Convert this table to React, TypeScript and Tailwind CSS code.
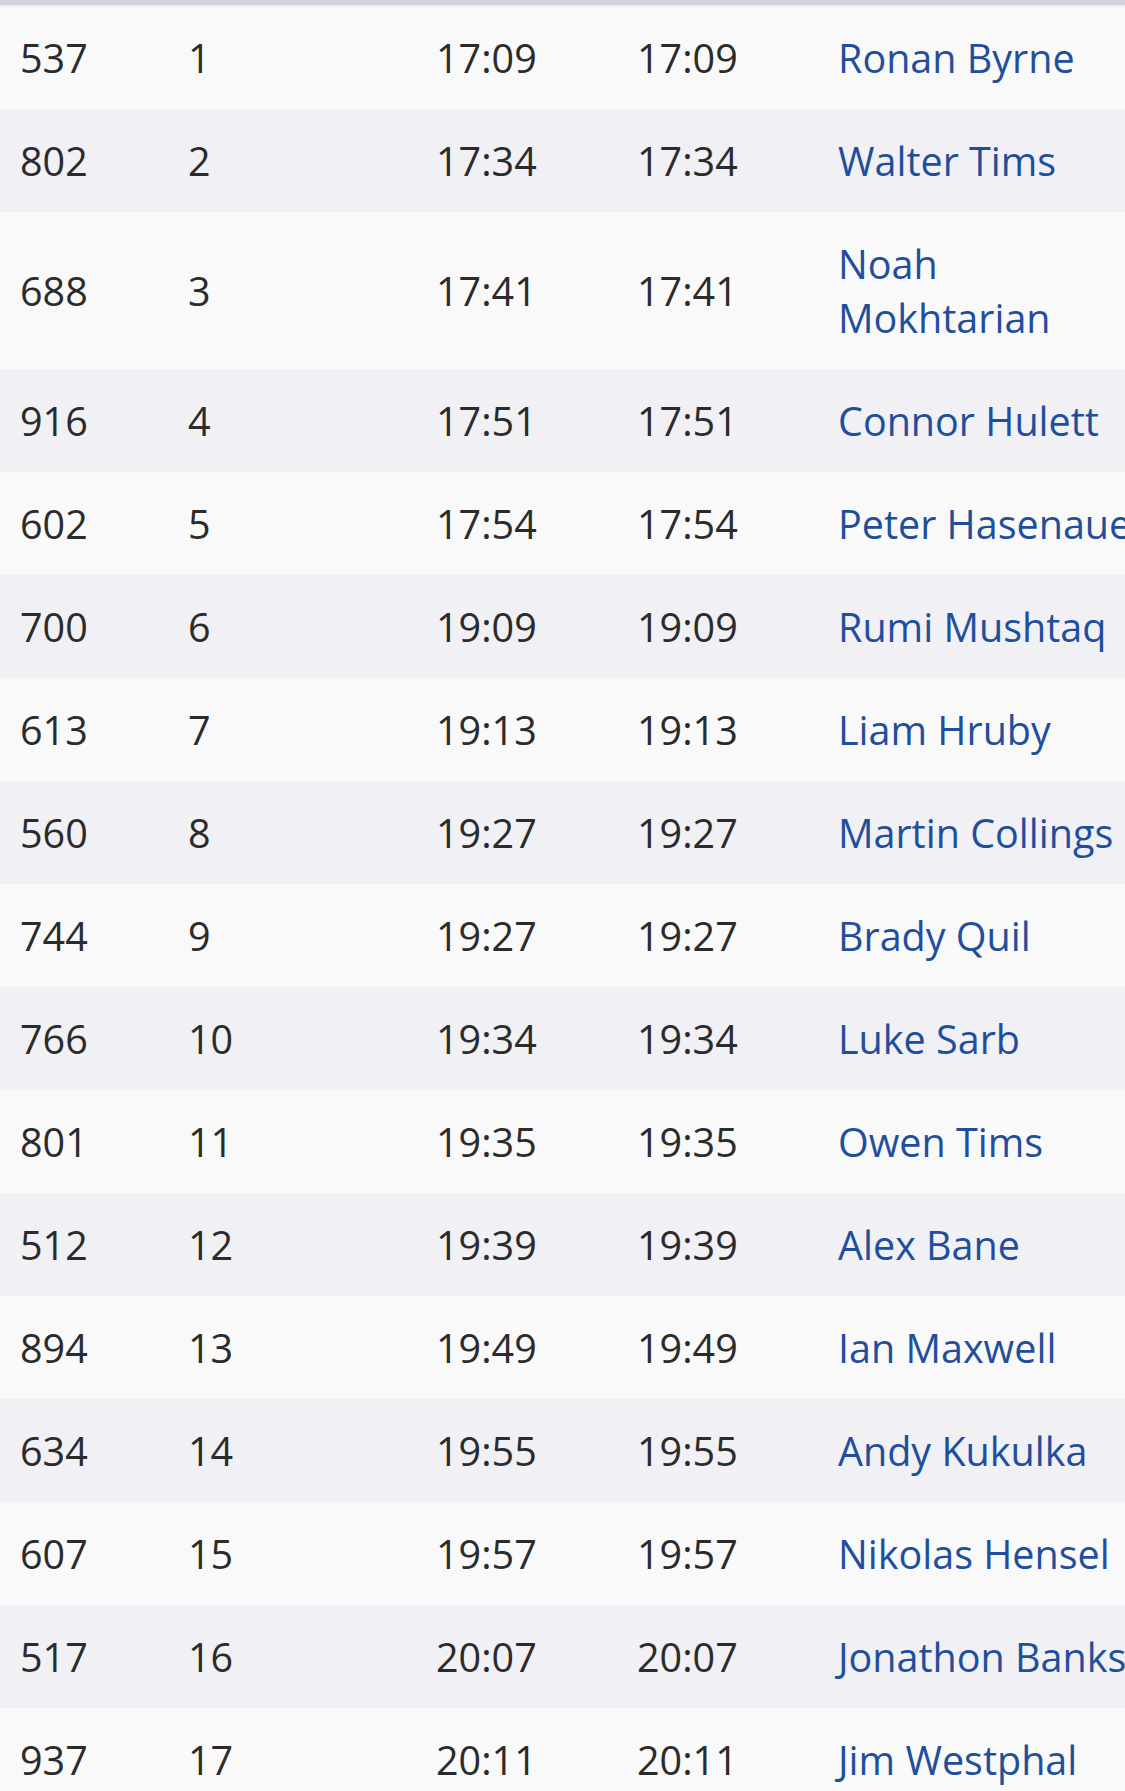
import React from "react";

const rows: [string, string, string, string, string][] = [
  ["537", "1", "17:09", "17:09", "Ronan Byrne"],
  ["802", "2", "17:34", "17:34", "Walter Tims"],
  ["688", "3", "17:41", "17:41", "Noah Mokhtarian"],
  ["916", "4", "17:51", "17:51", "Connor Hulett"],
  ["602", "5", "17:54", "17:54", "Peter Hasenauer"],
  ["700", "6", "19:09", "19:09", "Rumi Mushtaq"],
  ["613", "7", "19:13", "19:13", "Liam Hruby"],
  ["560", "8", "19:27", "19:27", "Martin Collings"],
  ["744", "9", "19:27", "19:27", "Brady Quil"],
  ["766", "10", "19:34", "19:34", "Luke Sarb"],
  ["801", "11", "19:35", "19:35", "Owen Tims"],
  ["512", "12", "19:39", "19:39", "Alex Bane"],
  ["894", "13", "19:49", "19:49", "Ian Maxwell"],
  ["634", "14", "19:55", "19:55", "Andy Kukulka"],
  ["607", "15", "19:57", "19:57", "Nikolas Hensel"],
  ["517", "16", "20:07", "20:07", "Jonathon Banks"],
  ["937", "17", "20:11", "20:11", "Jim Westphal"],
];

export default function App() {
  return (
    <div
      className="w-[1125px] h-[1791px] overflow-hidden bg-[#f9f9fa] text-[39.5px] leading-[54px] text-[#2b2b2b]"
      style={{ fontFamily: '"Open Sans", "Noto Sans", sans-serif' }}
    >
      <div className="h-[5px] bg-[#d4d4dc]" />
      <div className="w-[1200px]">
        {rows.map((r, i) => (
          <div
            key={i}
            className={`flex items-center ${
              i === 0 ? "border-t-2 border-[#ebebf0] pt-[23.5px] pb-[24.5px]" : "py-[24.5px]"
            } ${i % 2 === 1 ? "bg-[#f0f0f5]" : "bg-[#f9f9fa]"}`}
          >
            <div className="w-[168px] shrink-0 pl-[20px]">{r[0]}</div>
            <div className="w-[248px] shrink-0 pl-[20px]">{r[1]}</div>
            <div className="w-[202px] shrink-0 pl-[20px]">{r[2]}</div>
            <div className="w-[201px] shrink-0 pl-[19px]">{r[3]}</div>
            <div className="w-[340px] shrink-0 pl-[19px] text-[#1f4f9c]">{r[4]}</div>
          </div>
        ))}
      </div>
    </div>
  );
}
